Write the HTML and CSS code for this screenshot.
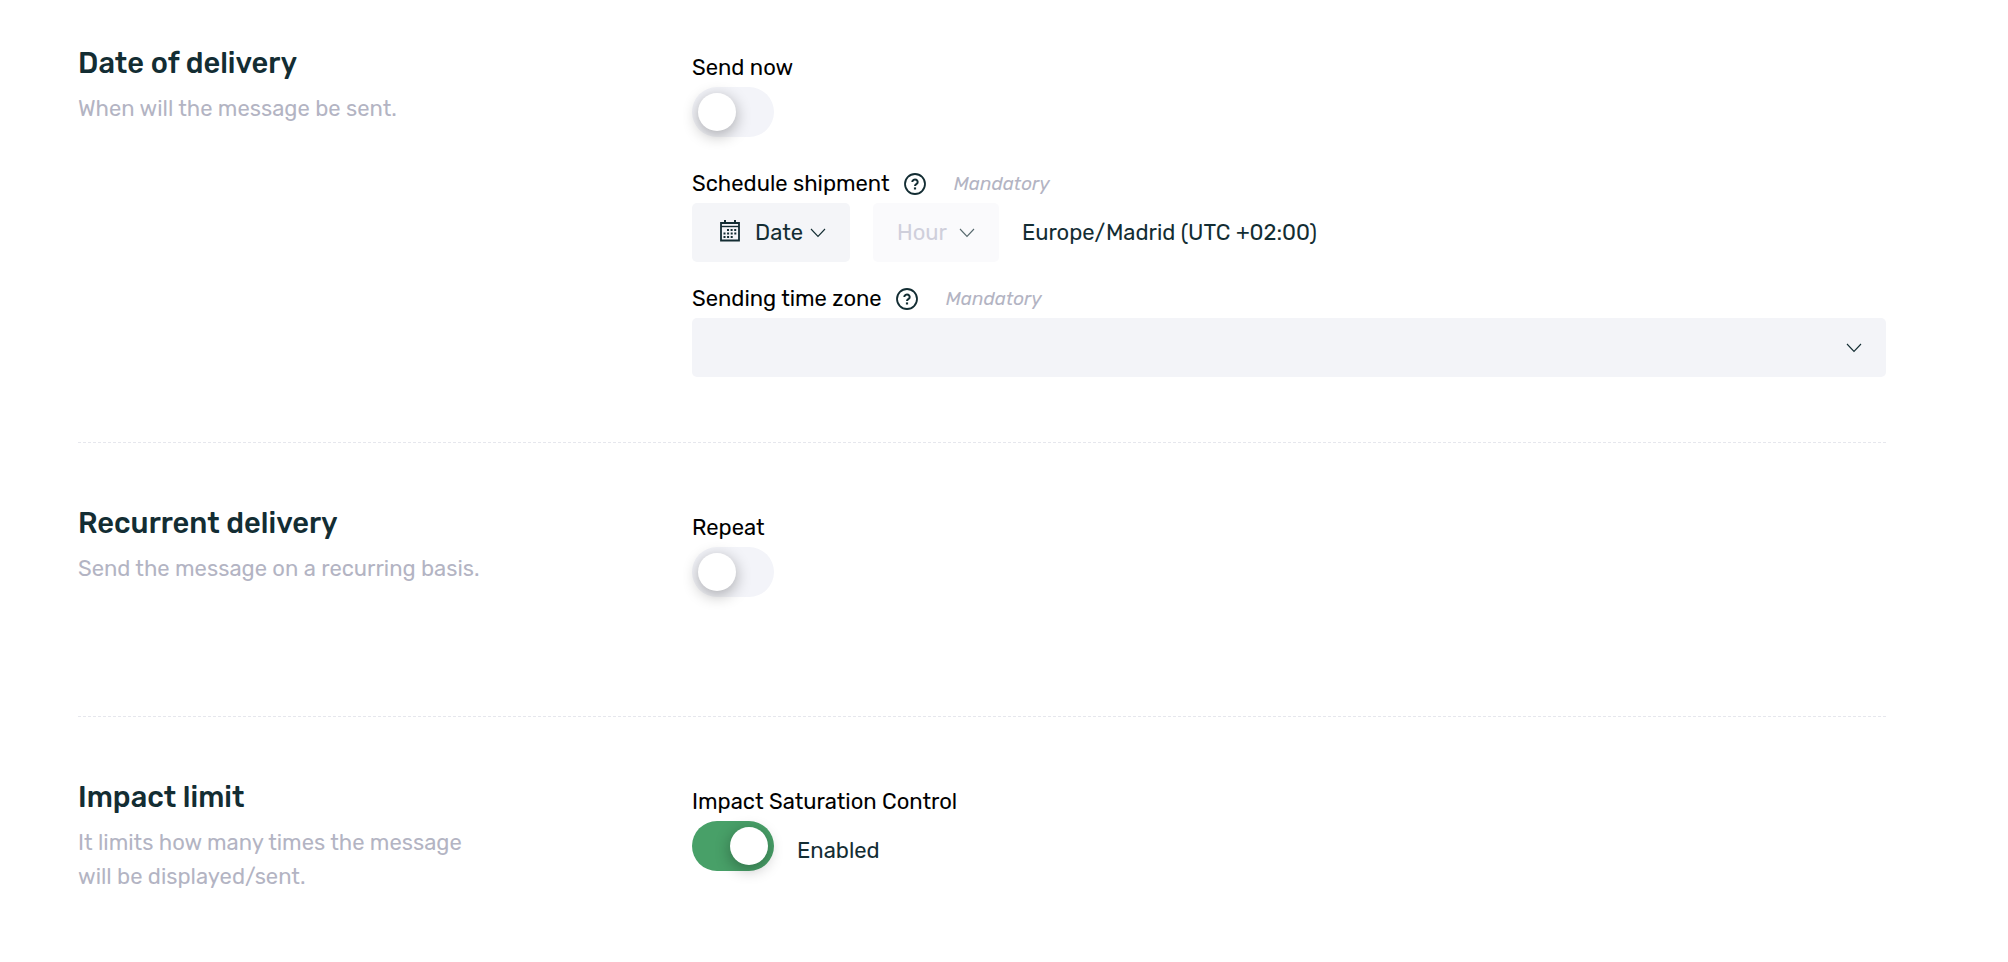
FILE: index.html
```html
<!DOCTYPE html>
<html lang="en">
<head>
<meta charset="utf-8">
<title>Delivery settings</title>
<link rel="stylesheet" href="styles.css">
</head>
<body>
<svg class="icon-defs" aria-hidden="true">
  <symbol id="chevron" viewBox="0 0 16 10"><path d="M1 1l7 7.5L15 1" fill="none" stroke="currentColor" stroke-width="1.1"/></symbol>
  <symbol id="help" viewBox="0 0 22 22">
    <circle cx="11" cy="11" r="10" fill="none" stroke="currentColor" stroke-width="1.8"/>
    <path d="M8.3 9a2.7 2.5 0 1 1 4.3 2c-1 .7-1.6 1-1.6 2.1" fill="none" stroke="currentColor" stroke-width="2"/>
    <path d="M9.9 14.4h2.2v2.1H9.9z" fill="currentColor"/>
  </symbol>
</svg>
<main class="settings">
  <section class="section">
    <header class="intro">
      <h2 class="title">Date of delivery</h2>
      <p class="description">When will the message be sent.</p>
    </header>
    <div class="fields">
      <div class="field field-wide">
        <label class="label" for="send-now">Send now</label>
        <input class="switch" type="checkbox" role="switch" id="send-now">
      </div>
      <div class="field">
        <div class="label-row">
          <span class="label" id="schedule-label">Schedule shipment</span>
          <button class="help" type="button" aria-label="Help"><svg class="help-icon"><use href="#help"/></svg></button>
          <span class="mandatory">Mandatory</span>
        </div>
        <div class="schedule" role="group" aria-labelledby="schedule-label">
          <button class="picker picker-date" type="button">
            <svg class="calendar" viewBox="0 0 20 22">
              <path d="M1 3h18v17.5H1z" fill="none" stroke="currentColor" stroke-width="1.8"/>
              <path d="M1 6.5h18" stroke="currentColor" stroke-width="1.4"/>
              <path d="M5 0v4M15 0v4" stroke="currentColor" stroke-width="2"/>
              <path d="M7 10h10M3.500 13.500h13.500M3.500 17h10" stroke="currentColor" stroke-width="2" stroke-dasharray="2 1.6"/>
            </svg>
            <span class="picker-text">Date</span>
            <svg class="chevron"><use href="#chevron"/></svg>
          </button>
          <button class="picker picker-hour" type="button" disabled>
            <span class="picker-text">Hour</span>
            <svg class="chevron"><use href="#chevron"/></svg>
          </button>
          <span class="value">Europe/Madrid (UTC +02:00)</span>
        </div>
      </div>
      <div class="field">
        <div class="label-row">
          <label class="label" for="zone">Sending time zone</label>
          <button class="help" type="button" aria-label="Help"><svg class="help-icon"><use href="#help"/></svg></button>
          <span class="mandatory">Mandatory</span>
        </div>
        <div class="select-box">
          <select class="select" id="zone"><option></option></select>
          <svg class="chevron select-chevron"><use href="#chevron"/></svg>
        </div>
      </div>
    </div>
  </section>
  <section class="section">
    <header class="intro">
      <h2 class="title">Recurrent delivery</h2>
      <p class="description">Send the message on a recurring basis.</p>
    </header>
    <div class="fields">
      <div class="field field-wide">
        <label class="label" for="repeat">Repeat</label>
        <input class="switch" type="checkbox" role="switch" id="repeat">
      </div>
    </div>
  </section>
  <section class="section">
    <header class="intro">
      <h2 class="title">Impact limit</h2>
      <p class="description">It limits how many times the message will be displayed/sent.</p>
    </header>
    <div class="fields">
      <div class="field">
        <label class="label" for="saturation">Impact Saturation Control</label>
        <div class="switch-row">
          <input class="switch" type="checkbox" role="switch" id="saturation" checked>
          <span class="value switch-value">Enabled</span>
        </div>
      </div>
    </div>
  </section>
</main>
</body>
</html>
```
FILE: styles.css
```css
* {
  box-sizing: border-box;
}

body {
  margin: 0;
  background: #fff;
  color: #132d33;
  font: 22px/34px Rubik, Roboto, sans-serif;
}

.icon-defs {
  display: none;
}

.settings {
  padding: 0 122px 0 78px;
}

.section {
  display: grid;
  grid-template-columns: 614fr 1194fr;
  padding: 60px 0 65px;
}

.section:first-child {
  padding-top: 43px;
}

.section + .section {
  min-height: 274px;
  border-top: 1px dashed #e6e7ed;
}

.intro {
  max-width: 410px;
}

.title {
  margin: 0 0 9px;
  font-size: 29px;
  font-weight: 500;
  line-height: 40px;
}

.description {
  margin: 0;
  color: #b3b4c3;
}

.fields {
  padding-top: 8px;
}

.field {
  display: flex;
  flex-direction: column;
  align-items: flex-start;
  gap: 2px;
  margin-bottom: 20px;
}

.field-wide {
  margin-bottom: 30px;
}

.field:last-child {
  margin-bottom: 0;
}

.label {
  color: #000;
}

.label-row {
  display: flex;
  align-items: center;
}

.help {
  display: flex;
  margin: 0 28px 0 14px;
  padding: 0;
  border: 0;
  background: none;
  color: #132d33;
}

.help-icon {
  width: 22px;
  height: 22px;
}

.mandatory {
  color: #b3b4c3;
  font-size: 19px;
  font-style: italic;
}

.switch {
  appearance: none;
  width: 82px;
  height: 50px;
  margin: 0;
  padding: 6px;
  border-radius: 25px;
  background: #f3f4f9;
}

.switch::before {
  content: "";
  display: block;
  width: 38px;
  height: 38px;
  border-radius: 50%;
  background: #fff;
  box-shadow: 0 4px 16px rgba(0, 0, 0, 0.32);
}

.switch:checked {
  background: #48a068;
}

.switch:checked::before {
  margin-left: auto;
}

.switch-row,
.schedule {
  display: flex;
  align-items: center;
  gap: 23px;
}

.switch-value {
  padding-top: 10px;
}

.picker {
  display: flex;
  align-items: center;
  height: 59px;
  padding: 0 24px;
  border: 0;
  border-radius: 5px;
  background: #f4f5f8;
  color: #132d33;
  font: inherit;
}

.picker-date {
  min-width: 158px;
  padding-left: 28px;
}

.picker-hour {
  min-width: 126px;
  background: #fafafc;
}

.picker-hour .picker-text {
  color: #cfcfdb;
}

.picker-hour .chevron {
  opacity: 0.7;
}

.picker-text {
  margin-right: auto;
}

.calendar {
  width: 20px;
  height: 22px;
  margin: 0 15px 4px 0;
}

.chevron {
  width: 16px;
  height: 10px;
}

.select-box {
  position: relative;
  width: 100%;
}

.select {
  appearance: none;
  display: block;
  width: 100%;
  height: 59px;
  padding: 0 24px;
  border: 0;
  border-radius: 5px;
  background: #f3f4f8;
  font: inherit;
}

.select-chevron {
  position: absolute;
  top: 25px;
  right: 24px;
  pointer-events: none;
}
```
